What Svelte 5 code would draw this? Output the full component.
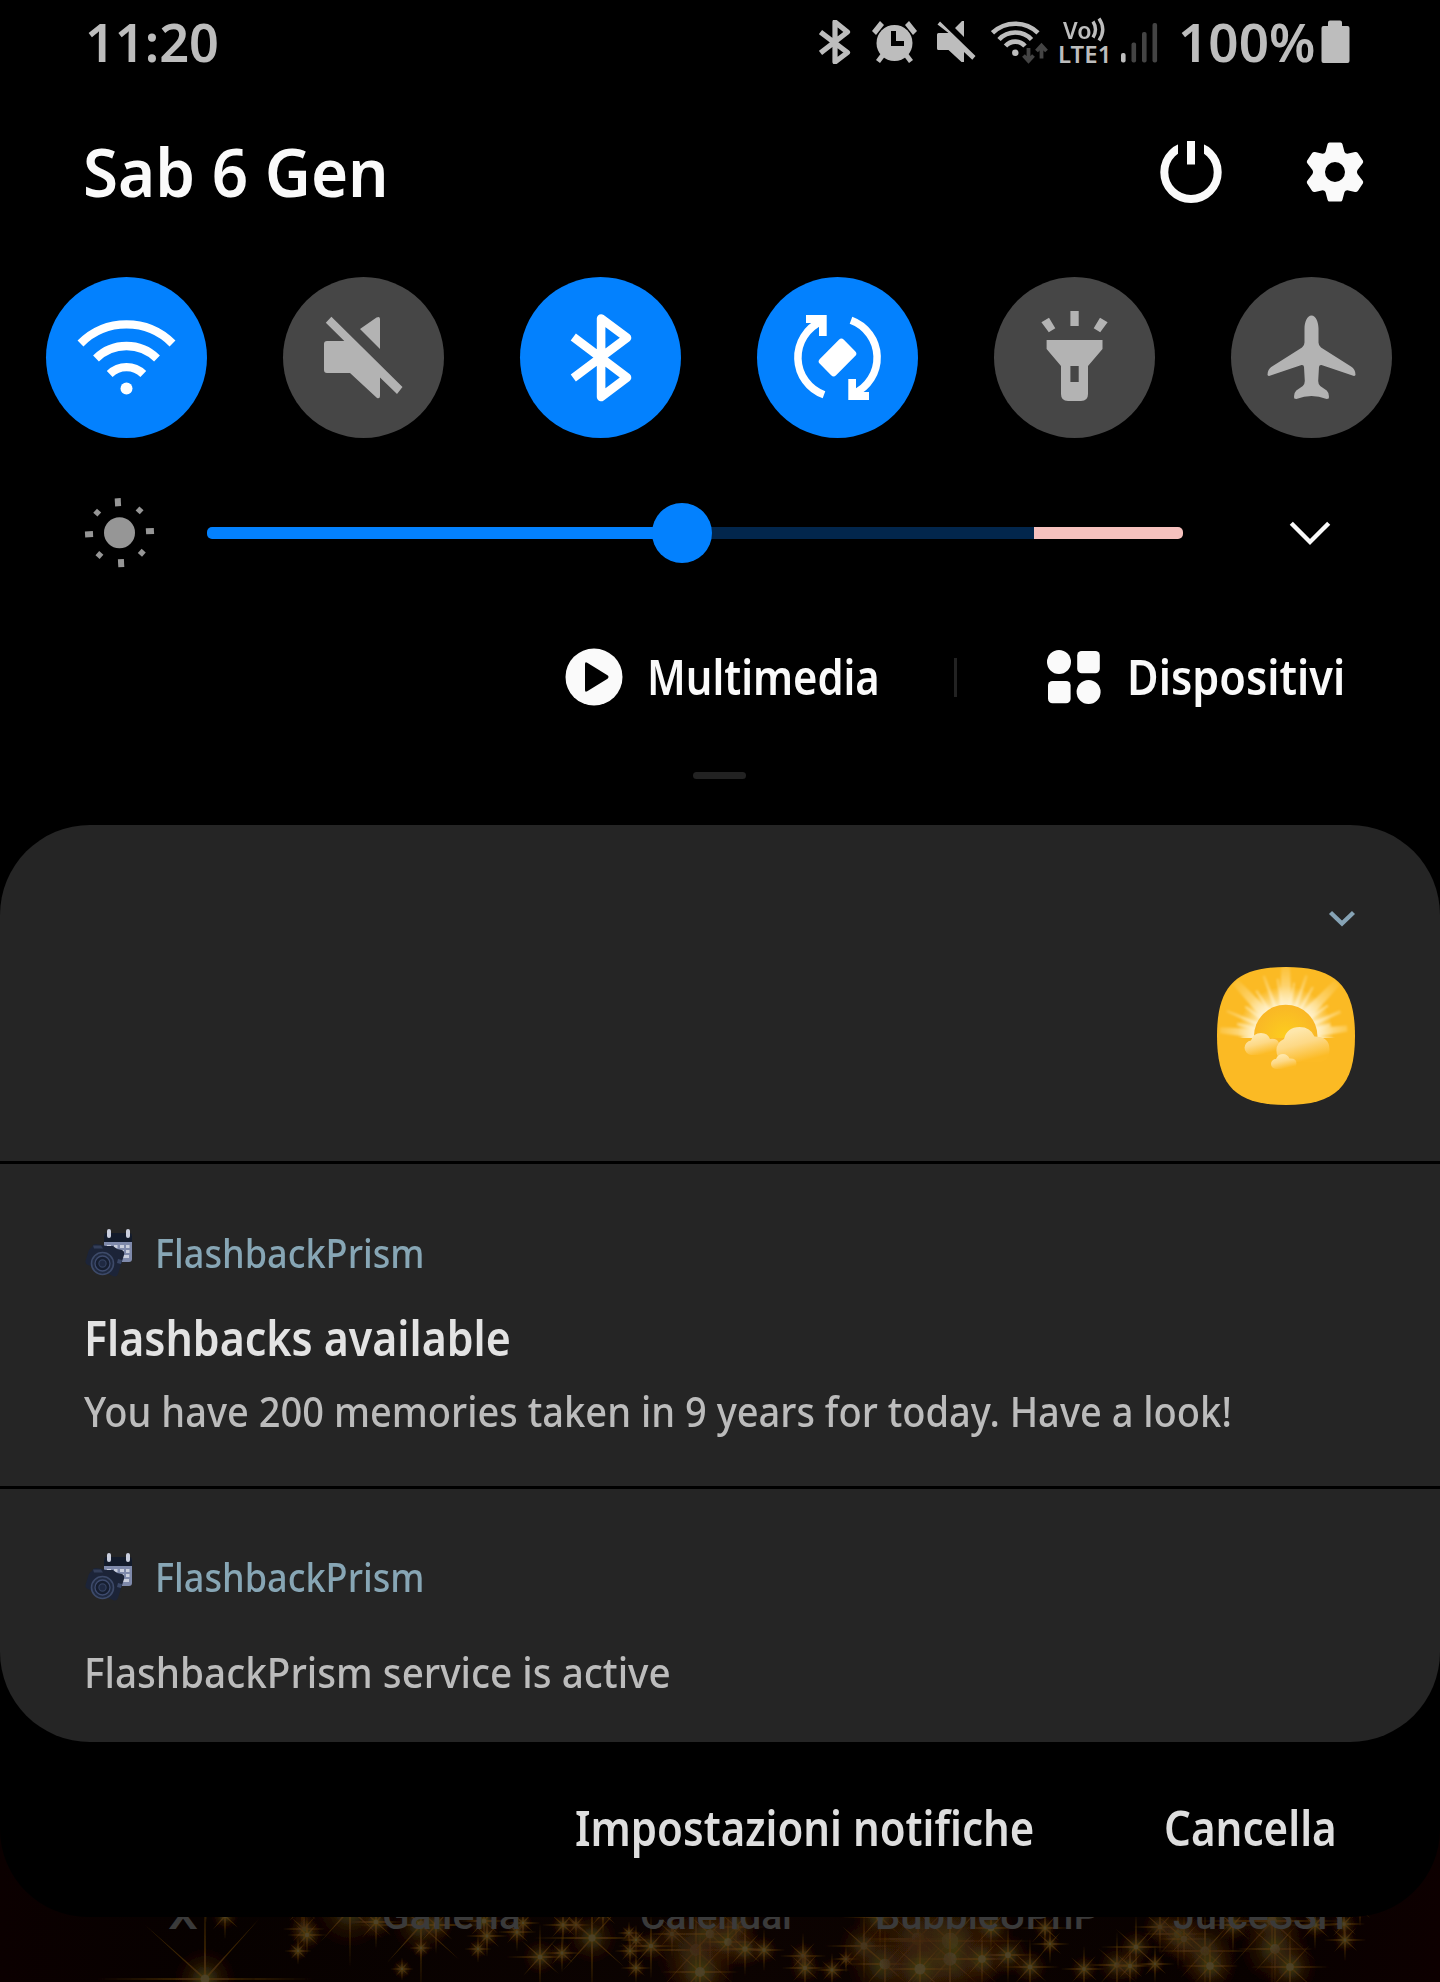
<script>
  // Scales a label horizontally so that it fills the width of its slot.
  function fit(node, width) {
    const natural = node.offsetWidth;
    if (natural) node.style.transform = `scaleX(${width / natural})`;
  }

  const rays = [
    [0, 70, 7], [-20, 64, 2], [-8, 58, 1.6], [19, 64, 2], [9, 54, 1.6], [29, 56, 1.8],
    [-43, 74, 6], [-33, 54, 2], [44, 74, 6], [54, 52, 2], [-54, 50, 2], [-67, 64, 2],
    [66, 60, 2.4], [-85, 66, 5], [-76, 50, 2.6], [83, 62, 5], [76, 46, 2.6], [-94, 44, 3], [94, 48, 2.4]
  ];

  // [x, y, ray length, glow radius]
  const stars = [
    [206, 76, 18, 6], [225, 87, 24, 7], [205, 150, 110, 16], [302, 78, 26, 9], [304, 100, 22, 8], [307, 106, 20, 8],
    [298, 122, 14, 5], [350, 80, 60, 20], [376, 93, 28, 9], [421, 96, 70, 15], [436, 96, 30, 9], [421, 119, 12, 5],
    [484, 92, 26, 9], [487, 107, 22, 6], [478, 120, 14, 5], [517, 103, 20, 6], [523, 94, 18, 5], [402, 140, 12, 5],
    [540, 128, 34, 9], [563, 96, 22, 6], [562, 124, 20, 6], [576, 96, 16, 5], [592, 109, 60, 13], [603, 84, 22, 6],
    [629, 104, 12, 4], [636, 111, 16, 5], [651, 117, 34, 8], [630, 122, 16, 5], [672, 105, 24, 8], [636, 139, 16, 5],
    [696, 121, 70, 22], [710, 105, 36, 16], [736, 98, 30, 12], [728, 113, 30, 14], [745, 120, 28, 10], [764, 121, 22, 7],
    [803, 127, 24, 7], [805, 139, 24, 8], [832, 141, 18, 6], [846, 130, 14, 4], [864, 117, 40, 13], [880, 88, 40, 14],
    [885, 135, 40, 20], [918, 110, 60, 24], [950, 112, 90, 30], [950, 130, 50, 24], [991, 99, 28, 12], [1045, 99, 26, 6],
    [1050, 115, 20, 5], [982, 130, 30, 14], [1008, 126, 30, 11], [1030, 138, 30, 9], [1084, 140, 24, 7], [1117, 136, 34, 10],
    [1136, 118, 36, 9], [1160, 98, 28, 9], [1178, 105, 36, 14], [1184, 110, 26, 12], [1130, 137, 22, 8], [1155, 135, 20, 5],
    [1205, 122, 50, 17], [1233, 96, 30, 9], [1272, 92, 80, 17], [1275, 120, 40, 18], [1210, 137, 30, 14], [1315, 96, 26, 7],
    [1344, 95, 22, 7], [1345, 111, 22, 6], [1360, 80, 18, 5], [1290, 138, 40, 14], [920, 140, 40, 20], [700, 143, 40, 18]
  ];

  const apps = [
    ['X', 168, 30], ['Galleria', 382, 139], ['Calendar', 640, 156], ['BubbleUPnP', 875, 224], ['JuiceSSH', 1173, 172]
  ];
</script>

{#snippet label(text, cls, width)}
  <span class="slot {cls}" style="width:{width}px"><span class="fit" use:fit={width}>{text}</span></span>
{/snippet}

{#snippet camera()}
  <svg class="app-icon" width="48" height="48" viewBox="0 0 48 48">
    <rect x="19" y="5" width="28" height="28" rx="3" fill="#7f8aab" />
    <path d="M19 13V7q0-3 3-3h22q3 0 3 3v6z" fill="#131b2b" />
    <g fill="#c9cedd">
      <rect x="22" y="0" width="4" height="9" rx="2" />
      <rect x="41" y="0" width="4" height="9" rx="2" />
      <path d="M22 16h4v3h-4zM29 16h3.500v3h-3.500zM35 16h4v3h-4zM41 16h3.500v3h-3.500zM35 21h4v3h-4zM41 21h3.500v3h-3.500zM38 26h6v3h-6z" />
    </g>
    <path d="M7 18q1-3 4-3l6 1 4 1 7 0 4 3 5 1q3 1 2 5l-6 19q-1 3-4 2.500L3 36q-3-1-2.500-4l3-10q.5-2 3.500-4z" fill="#1c2438" />
    <path d="M8 16.500l8 0 2 3-9 0z" fill="#333e59" />
    <circle cx="17.500" cy="34.500" r="11" fill="#202a40" stroke="#3d4a69" stroke-width="1.600" />
    <circle cx="17.500" cy="34.500" r="7.500" fill="#161e30" stroke="#3f4c6f" stroke-width="1.300" />
    <circle cx="17.500" cy="34.500" r="3.600" fill="#1f2942" stroke="#34415f" stroke-width="1.200" />
    <path d="M33 30l4 1-1 4-4-1z" fill="#3a4766" />
  </svg>
{/snippet}

<main>
  <div class="shade">
    <header class="status">
      {@render label('11:20', 'clock', 134)}
      <div class="indicators">
        <svg width="32" height="44" viewBox="819 19.500 32 44">
          <path d="M820.500 31.500l27 20.500-12.500 9.500V21.500L847.500 31.500 820.500 52.500" fill="none" stroke="#bdbdbd" stroke-width="5.200" stroke-linejoin="round" />
        </svg>
        <svg class="alarm" width="45" height="43" viewBox="872 20 45 43">
          <g fill="#bdbdbd">
            <circle cx="894.500" cy="43" r="18" />
            <path d="M872 31l8-10 4 4-8 10zM917 31l-8-10-4 4 8 10zM876 60l6-8 4 3-6 8zM913 60l-6-8-4 3 6 8z" />
          </g>
          <path d="M891 31h5v10h8v5h-13z" fill="#000" />
        </svg>
        <svg class="mute" width="39" height="43" viewBox="937 20 39 43">
          <path d="M940 21.500l35.500 34.500-3.200 3.800L964 52v10h-2.500L948.500 50H938.500q-1.500 0-1.500-1.500V34.500q0-1.500 1.500-1.500H948.500L937.500 24.500zM955 28l7-7h2V37z" fill="#bdbdbd" />
        </svg>
        <svg class="wifi" width="57" height="44" viewBox="991 19 57 44">
          <g fill="none" stroke="#bdbdbd" stroke-width="4.600">
            <path d="M992.500 31.800a33 33 0 0 1 45.500 0M999 38.500a22.500 22.500 0 0 1 32.500 0M1005.500 45a13 13 0 0 1 19.500 0" />
          </g>
          <circle cx="1015.300" cy="51.800" r="3.200" fill="#bdbdbd" />
          <path d="M1028.500 47v12M1023.500 54.500l5 5.500 5-5.500M1041.500 57.500V46M1036.500 50l5-5.500 5 5.500" fill="none" stroke="#444" stroke-width="3.800" />
        </svg>
        <div class="volte">
          <div class="vo">
            {@render label('Vo', 'tiny', 28)}
            <svg width="15" height="25" viewBox="0 0 15 25">
              <path d="M2 4.500q5 8 0 16M8 1.500q7.500 11 0 22" fill="none" stroke="#bdbdbd" stroke-width="3.400" />
            </svg>
          </div>
          {@render label('LTE1', 'tiny', 53)}
        </div>
        <svg class="signal" width="37" height="40" viewBox="1121 23 37 40">
          <rect x="1121" y="53" width="4.600" height="9.500" rx="2" fill="#bdbdbd" />
          <g fill="#444">
            <rect x="1131.500" y="42.500" width="4.600" height="20" rx="2" />
            <rect x="1142" y="32" width="4.600" height="30.500" rx="2" />
            <rect x="1152.500" y="23" width="4.600" height="39.500" rx="2" />
          </g>
        </svg>
        {@render label('100%', 'percent', 137)}
        <svg class="battery" width="29" height="44" viewBox="0 0 29 44">
          <path d="M9 .5h10q2 0 2 2V6h5.500q2 0 2 2v33q0 2-2 2H2.500q-2 0-2-2V8q0-2 2-2H7V2.500q0-2 2-2z" fill="#bdbdbd" />
        </svg>
      </div>
    </header>

    <section class="date-row">
      {@render label('Sab 6 Gen', 'date', 306)}
      <div class="actions">
        <svg width="62" height="64" viewBox="1160 140 62 64">
          <circle cx="1191" cy="172.300" r="26.700" fill="none" stroke="#fafafa" stroke-width="8" />
          <path d="M1178 140h26v16l-26 0z" fill="#000" />
          <rect x="1187" y="141" width="8" height="23.500" fill="#fafafa" />
        </svg>
        <svg width="58" height="62" viewBox="-29 -31 58 62">
          <path
            fill="#fafafa"
            fill-rule="evenodd"
            d="M-5.500-29.500H5.500Q7-29.500 7.400-28L9.500-20Q10.300-18.200 12.300-18.200L20-20Q22-20.300 23-18.800L28-11.200Q28.600-9.800 27.500-8.500L22.500-2Q21.300 0 22.500 2L27.500 8.500Q28.600 9.800 28 11.200L23 18.800Q22 20.300 20 20L12.300 18.200Q10.300 18.200 9.500 20L7.400 28Q7 29.500 5.500 29.500H-5.500Q-7 29.500-7.400 28L-9.500 20Q-10.300 18.200-12.300 18.200L-20 20Q-22 20.300-23 18.800L-28 11.200Q-28.600 9.800-27.500 8.500L-22.500 2Q-21.300 0-22.500-2L-27.500-8.500Q-28.600-9.800-28-11.200L-23-18.800Q-22-20.300-20-20L-12.300-18.200Q-10.300-18.200-9.500-20L-7.400-28Q-7-29.500-5.500-29.500ZM0-10a10 10 0 1 0 0 20a10 10 0 1 0 0-20Z"
          />
        </svg>
      </div>
    </section>

    <section class="tiles">
      <div class="tile on">
        <svg viewBox="46 277 161 161">
          <path d="M80.500 343.500a65 65 0 0 1 92 0M96 358.500a43.500 43.500 0 0 1 61 0M109.700 374a24 24 0 0 1 33.600 0" fill="none" stroke="#fff" stroke-width="8.300" />
          <circle cx="126.500" cy="388.500" r="6" fill="#fff" />
        </svg>
      </div>
      <div class="tile">
        <svg viewBox="283 277 161 161">
          <path d="M331.400 316.700l71.100 70.300-5.500 7-17-16.500V396q0 3-3 2L350 373H327q-3 0-3-3V344q0-3 3-3H344.300L325.800 322.700zM360 329l16.500-11.500q3.500-1.500 3.500 1.500V349z" fill="#b3b3b3" />
        </svg>
      </div>
      <div class="tile on">
        <svg viewBox="520 277 161 161">
          <path d="M573.300 337l53.700 40.500-25.900 19.500V318.500L627 337.800 573.300 378" fill="none" stroke="#fff" stroke-width="8.600" stroke-linejoin="round" />
        </svg>
      </div>
      <div class="tile on">
        <svg viewBox="757 277 161 161">
          <g id="half">
            <path d="M824 394.800A39.700 39.700 0 0 1 821.500 321.200" fill="none" stroke="#fff" stroke-width="7.500" />
            <path d="M806 315h20.700v21h-7.700v-13h-13z" fill="#fff" />
          </g>
          <use href="#half" transform="rotate(180 837.500 357.500)" />
          <rect x="820.500" y="346" width="34" height="23" rx="3.500" transform="rotate(-45 837.500 357.500)" fill="#fff" />
        </svg>
      </div>
      <div class="tile">
        <svg viewBox="994 277 161 161">
          <g fill="#b3b3b3">
            <path d="M1070.400 311h8.300v15h-8.300zM1049 317.800l6.300 10.500-6.500 4-7.400-10zM1100 317.800l-6.300 10.500 6.500 4 7.400-10z" />
            <path fill-rule="evenodd" d="M1046.600 340H1102.500V349L1088 366V394q0 7-7 7H1068q-7 0-7-7V366L1046.600 349zM1070.400 366V382H1078.700V366z" />
          </g>
        </svg>
      </div>
      <div class="tile">
        <svg viewBox="1231 277 161 161">
          <path d="M1311.500 315.500c4.500 0 7 7 7 13v14q0 3 2.500 5l30 19q4.500 2.500 4.500 8.500-1 1.500-3 .5l-31-10.500q-2.300-.3-2.500 2l-.8 14q0 3 2 5l6.500 4.500q3 3 2 8l-2 .5q-8-3-15.200-3t-15.200 3l-2-.5q-1-5 2-8l6.500-4.500q2-2 2-5l-.8-14q-.2-2.300-2.500-2l-31 10.500q-2 1-3-.5 0-6 4.500-8.500l30-19q2.500-2 2.500-5v-14c0-6 2.500-13 7-13z" fill="#b3b3b3" />
        </svg>
      </div>
    </section>

    <section class="brightness">
      <svg class="sun" width="72" height="72" viewBox="-36.500 -35.700 72 72">
        <g fill="#969696">
          <circle r="15.500" />
          <g transform="rotate(-3)">
            {#each [0, 90, 180, 270] as a}
              <rect x="-3" y="-34.500" width="6" height="8" transform="rotate({a})" />
              <rect x="-2.800" y="-32.800" width="5.600" height="5.600" transform="rotate({a + 45})" />
            {/each}
          </g>
        </g>
      </svg>
      <div class="slider">
        <div class="fill"></div>
        <div class="thumb"></div>
        <div class="rest"></div>
        <div class="warm"></div>
      </div>
      <svg class="expand" width="44" height="28" viewBox="0 -1 44 28">
        <path d="M3.300 3.300l18.700 18.700L40.700 3.300" fill="none" stroke="#fafafa" stroke-width="4.400" />
      </svg>
    </section>

    <nav class="shortcuts">
      <svg width="58" height="58" viewBox="0 0 58 58">
        <circle cx="29" cy="29" r="28.500" fill="#fafafa" />
        <path d="M20 16q0-2.500 2.200-1.200L42.500 27.300q2 1.700 0 3.400L22.200 43.200Q20 44.500 20 42z" fill="#000" />
      </svg>
      {@render label('Multimedia', 'shortcut media', 233)}
      <i class="rule"></i>
      <svg width="56" height="56" viewBox="1046 649 56 56">
        <g fill="#fafafa">
          <circle cx="1059" cy="662" r="12" />
          <rect x="1077.200" y="651" width="22.600" height="22.300" rx="4.500" />
          <rect x="1048" y="681" width="22.600" height="22.300" rx="4.500" />
          <circle cx="1088.600" cy="692" r="12" />
        </g>
      </svg>
      {@render label('Dispositivi', 'shortcut devices', 218)}
    </nav>

    <i class="handle"></i>

    <section class="cards">
      <article class="weather">
        <svg class="small-chevron" width="28" height="18" viewBox="0 0 28 18">
          <path d="M2.500 2.500L14 13.500 25.500 2.500" fill="none" stroke="#86a3b5" stroke-width="4.400" />
        </svg>
        <svg width="138" height="138" viewBox="0 0 138 138">
          <defs>
            <clipPath id="squircle"><path d="M69 0C119 0 138 19 138 69S119 138 69 138 0 119 0 69 19 0 69 0Z" /></clipPath>
            <radialGradient id="ray" gradientUnits="userSpaceOnUse" cx="68.700" cy="69" r="72">
              <stop offset=".4" stop-color="#fff3d2" stop-opacity=".9" />
              <stop offset=".7" stop-color="#ffe7a8" stop-opacity=".55" />
              <stop offset="1" stop-color="#ffe08e" stop-opacity=".15" />
            </radialGradient>
            <radialGradient id="halo" gradientUnits="userSpaceOnUse" cx="68.700" cy="67" r="48">
              <stop offset=".62" stop-color="#fff0c4" stop-opacity=".9" />
              <stop offset="1" stop-color="#ffe7a8" stop-opacity="0" />
            </radialGradient>
            <radialGradient id="disc"><stop offset="0" stop-color="#fdcd1e" /><stop offset="1" stop-color="#f9b726" /></radialGradient>
            <linearGradient id="cloud" x1=".2" y1="0" x2=".6" y2="1">
              <stop offset=".15" stop-color="#fee7ab" />
              <stop offset=".5" stop-color="#fdd987" />
              <stop offset=".95" stop-color="#fcbb25" />
            </linearGradient>
            <clipPath id="horizon"><path d="M0 0H138V71H0z" /></clipPath>
            <filter id="soften" x="-10%" y="-10%" width="120%" height="120%"><feGaussianBlur stdDeviation="1" /></filter>
          </defs>
          <g clip-path="url(#squircle)">
            <rect width="138" height="138" fill="#fbba24" />
            <g clip-path="url(#horizon)">
              <circle cx="68.700" cy="67" r="48" fill="url(#halo)" />
              <g filter="url(#soften)" fill="url(#ray)">
                {#each rays as [a, len, w]}
                  <path d="M{68.7 - w * 1.1} 69L{68.7 - w * 0.6} {69 - len}H{68.7 + w * 0.6}L{68.7 + w * 1.1} 69z" transform="rotate({a} 68.700 69)" />
                {/each}
              </g>
              <circle cx="68.700" cy="69.500" r="31.800" fill="url(#disc)" />
            </g>
            <path d="M34 88a7.300 7.300 0 0 1 0-14.500Q36 66 44 66q7 0 9 6 7-1 9 4V88z" fill="url(#cloud)" />
            <path d="M67 95a12.500 12.500 0 0 1 0-23Q70 60 82.500 60q11 0 15 9.500 15 0 15 13T100 95z" fill="url(#cloud)" />
            <path d="M59 102a5 5 0 0 1 0-10Q61 87 66 87q4.500 0 6.500 4.500 7-.5 7 5t-6 5.500z" fill="url(#cloud)" />
          </g>
        </svg>
      </article>

      <article class="note">
        <div class="app">
          {@render camera()}
          {@render label('FlashbackPrism', 'app-name', 269)}
        </div>
        <div class="title">{@render label('Flashbacks available', 'heading', 427)}</div>
        <div class="body">{@render label('You have 200 memories taken in 9 years for today. Have a look!', 'copy', 1148)}</div>
      </article>

      <article class="note last">
        <div class="app">
          {@render camera()}
          {@render label('FlashbackPrism', 'app-name', 269)}
        </div>
        <div class="body">{@render label('FlashbackPrism service is active', 'copy', 587)}</div>
      </article>
    </section>

    <footer>
      {@render label('Impostazioni notifiche', 'button', 459)}
      {@render label('Cancella', 'button clear', 173)}
    </footer>
  </div>

  <div class="home">
    <svg width="1440" height="153" viewBox="0 0 1440 153">
      <defs>
        <radialGradient id="glow">
          <stop offset="0" stop-color="#45400f" stop-opacity=".95" />
          <stop offset=".25" stop-color="#3d3610" stop-opacity=".7" />
          <stop offset=".5" stop-color="#3a2208" stop-opacity=".45" />
          <stop offset=".75" stop-color="#331204" stop-opacity=".25" />
          <stop offset="1" stop-color="#2a0c02" stop-opacity="0" />
        </radialGradient>
        <linearGradient id="night">
          <stop offset="0" stop-color="#0b0000" />
          <stop offset=".14" stop-color="#070100" />
          <stop offset=".5" stop-color="#0c0301" />
          <stop offset=".88" stop-color="#080100" />
          <stop offset="1" stop-color="#0d0000" />
        </linearGradient>
        <filter id="haze"><feGaussianBlur stdDeviation=".5" /></filter>
      </defs>
      <rect width="1440" height="153" fill="url(#night)" />
      <g filter="url(#haze)">
        {#each stars as [x, y, len, r]}
          <g transform="translate({x} {y})">
            <circle r={r * 2} fill="url(#glow)" />
            <g fill="#5c3a0c" opacity=".6">
              <path d="M0 {-len}L1.200 0 0 {len}-1.200 0zM{-len} 0L0-1.200 {len} 0 0 1.200z" />
              <path d="M0 {-len * 0.75}L1 0 0 {len * 0.75}-1 0zM{-len * 0.75} 0L0-1 {len * 0.75} 0 0 1z" transform="rotate(42)" />
            </g>
            <circle r={r * 0.28} fill="#4d4630" opacity=".7" />
          </g>
        {/each}
      </g>
      <g class="apps">
        {#each apps as [name, x, w]}
          <text {x} y="100" textLength={w} lengthAdjust="spacingAndGlyphs">{name}</text>
        {/each}
      </g>
    </svg>
  </div>
</main>

<style>
  :global(body) {
    margin: 0;
    background: #000;
  }
  main {
    width: 1440px;
    height: 1982px;
    overflow: hidden;
    font-family: 'Noto Sans', 'Open Sans', sans-serif;
    color: #fafafa;
  }
  svg {
    display: block;
    flex: none;
  }
  .shade {
    position: relative;
    z-index: 1;
    display: flex;
    flex-direction: column;
    height: 1917px;
    background: #000;
    border-radius: 0 0 88px 88px;
  }
  .slot {
    display: block;
    flex: none;
    white-space: nowrap;
  }
  .fit {
    display: inline-block;
    transform-origin: 0 50%;
  }
  .status {
    display: flex;
    justify-content: space-between;
    align-items: center;
    height: 83px;
    padding: 0 90px 0 85px;
    color: #bdbdbd;
  }
  .clock,
  .percent {
    font-size: 53px;
    line-height: 60px;
    font-weight: 600;
  }
  .indicators {
    display: flex;
    align-items: center;
  }
  .alarm {
    margin-left: 21px;
  }
  .mute {
    margin-left: 20px;
  }
  .wifi {
    margin-left: 15px;
  }
  .volte {
    margin-left: 10px;
    width: 53px;
  }
  .vo {
    display: flex;
    justify-content: center;
    align-items: center;
    height: 24px;
  }
  .tiny {
    font-size: 24px;
    line-height: 24px;
    font-weight: 600;
  }
  .signal {
    margin-left: 10px;
    margin-top: 3px;
  }
  .percent {
    margin-left: 20px;
  }
  .battery {
    margin-left: 6px;
  }
  .date-row {
    display: flex;
    justify-content: space-between;
    align-items: center;
    height: 178px;
    padding: 0 76px 0 83px;
  }
  .date {
    font-size: 67px;
    line-height: 80px;
    font-weight: 600;
    margin-top: -2px;
  }
  .actions {
    display: flex;
    align-items: center;
    gap: 84px;
  }
  .tiles {
    display: flex;
    justify-content: space-between;
    margin: 16px 48px 0 46px;
  }
  .tile {
    width: 161px;
    height: 161px;
    border-radius: 50%;
    background: #464646;
  }
  .tile.on {
    background: #0381fe;
  }
  .brightness {
    display: flex;
    align-items: center;
    height: 190px;
    padding-left: 83px;
  }
  .slider {
    display: flex;
    align-items: center;
    width: 976px;
    margin-left: 52px;
  }
  .fill {
    width: 450px;
    height: 12px;
    border-radius: 5px 0 0 5px;
    background: #0381fe;
  }
  .thumb {
    width: 60px;
    height: 60px;
    margin: 0 -5px;
    border-radius: 50%;
    background: #0381fe;
    z-index: 1;
  }
  .rest {
    flex: 1;
    height: 12px;
    background: #02264c;
  }
  .warm {
    width: 149px;
    height: 12px;
    border-radius: 0 5px 5px 0;
    background: #f6c1be;
  }
  .expand {
    margin-left: 105px;
  }
  .shortcuts {
    display: flex;
    align-items: center;
    height: 98px;
    padding-left: 565px;
  }
  .shortcut {
    font-size: 48px;
    line-height: 60px;
    font-weight: 600;
  }
  .media {
    margin-left: 24px;
  }
  .rule {
    width: 3px;
    height: 39px;
    margin: 0 89px 0 74px;
    background: #222;
  }
  .devices {
    margin-left: 25px;
  }
  .handle {
    width: 53px;
    height: 7px;
    margin: 46px auto 46px 693px;
    border-radius: 3.500px;
    background: #222;
  }
  .cards {
    display: flex;
    flex-direction: column;
    height: 917px;
    border-radius: 90px;
    overflow: hidden;
    background: #252525;
  }
  article {
    box-sizing: border-box;
  }
  .weather {
    display: flex;
    flex-direction: column;
    align-items: flex-end;
    height: 339px;
    padding: 85px 85px 0 0;
    border-bottom: 3px solid #000;
  }
  .small-chevron {
    margin: 0 -1px 39px 0;
  }
  .note {
    height: 325px;
    padding: 65px 84px 0;
    border-bottom: 3px solid #000;
  }
  .note.last {
    height: 253px;
    padding-top: 64px;
    border: 0;
  }
  .app {
    display: flex;
    align-items: center;
    height: 48px;
    gap: 22px;
    padding-left: 1px;
  }
  .app-name {
    font-size: 40px;
    line-height: 48px;
    font-weight: 550;
    color: #87a6b5;
  }
  .title {
    margin-top: 31px;
  }
  .heading {
    font-size: 48px;
    line-height: 60px;
    font-weight: 600;
    color: #e3e3e3;
  }
  .body {
    margin-top: 18px;
  }
  .last .body {
    margin-top: 46px;
  }
  .copy {
    font-size: 42px;
    line-height: 50px;
    font-weight: 550;
    color: #bcbcbc;
  }
  footer {
    display: flex;
    justify-content: flex-end;
    align-items: center;
    height: 172px;
    padding-right: 103px;
  }
  .button {
    font-size: 48px;
    line-height: 60px;
    font-weight: 650;
    color: #dedede;
  }
  .clear {
    margin-left: 130px;
  }
  .home {
    height: 153px;
    margin-top: -88px;
  }
  .apps text {
    font: 500 38px Roboto, sans-serif;
    fill: #3a3a3a;
  }
</style>
